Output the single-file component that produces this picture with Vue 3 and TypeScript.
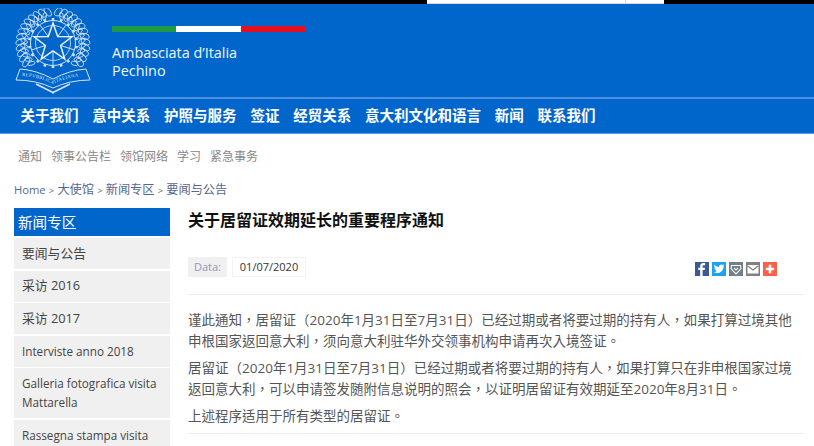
<script setup lang="ts">
const mainNav = ['关于我们', '意中关系', '护照与服务', '签证', '经贸关系', '意大利文化和语言', '新闻', '联系我们']
const subNav = ['通知', '领事公告栏', '领馆网络', '学习', '紧急事务']
const sideItems = [
  { label: '要闻与公告', cjk: true },
  { label: '采访 2016', cjk: true },
  { label: '采访 2017', cjk: true },
  { label: 'Interviste anno 2018', cjk: false },
  { label: 'Galleria fotografica visita Mattarella', cjk: false },
  { label: 'Rassegna stampa visita', cjk: false },
]
const rays = [36, 108, 180, 252, 324]
const teeth = Array.from({ length: 18 }, (_, i) => i * 20)
const leaves = Array.from({ length: 13 }, (_, i) => i)
</script>

<template>
  <div class="page">
    <div class="topstrip">
      <div class="tab"></div>
      <div class="tab short"></div>
    </div>

    <header class="head">
      <div class="brand">
        <svg class="emblem" viewBox="0 0 78 88" fill="none" stroke="#d5e4f6">
          <g stroke-width=".8">
            <g v-for="n in leaves" :key="'l' + n" :transform="`rotate(${-128 + n * 9.6} 39 36)`">
              <ellipse cx="41" cy="3.500" rx="2.600" ry="5" transform="rotate(-22 41 3.500)" />
              <ellipse cx="37" cy="7" rx="1.800" ry="3.800" transform="rotate(22 37 7)" />
            </g>
            <g v-for="n in leaves" :key="'r' + n" :transform="`rotate(${128 - n * 9.6} 39 36)`">
              <ellipse cx="37" cy="3.500" rx="3" ry="4.600" transform="rotate(22 37 3.500)" />
              <ellipse cx="41" cy="7" rx="2" ry="3.600" transform="rotate(-22 41 7)" />
            </g>
          </g>
          <circle cx="39" cy="35" r="22.500" fill="#0066cc" stroke-width="1" />
          <g stroke-width="2.600">
            <line v-for="t in teeth" :key="t" x1="39" y1="10" x2="39" y2="12.500" :transform="`rotate(${t} 39 35)`" />
          </g>
          <circle cx="39" cy="35" r="17.500" stroke-width=".8" />
          <g stroke-width=".9">
            <line v-for="r in rays" :key="r" x1="39" y1="35" x2="39" y2="13" :transform="`rotate(${r} 39 35)`" />
          </g>
          <polygon points="39,15 43.700,28.500 58,28.800 46.600,37.500 50.800,51.200 39,43 27.200,51.200 31.400,37.500 20,28.800 34.300,28.500" fill="#0066cc" stroke="#eaf2fb" stroke-width="1.500" />
          <path d="M6 61 Q22 62 39 71 Q56 62 72 61 L76 72 Q56 72 39 80 Q22 72 2 72 Z" fill="#0066cc" stroke-width="1" />
          <path d="M22 76 L40 85 M56 76 L38 85" stroke-width="1.600" />
          <path id="ribbon-line" d="M5 68 Q23 68 39 76 Q55 68 74 68" stroke="none" />
          <text class="motto" fill="#d5e4f6" stroke="none">
            <textPath href="#ribbon-line" startOffset="3">REPVBBLICA ITALIANA</textPath>
          </text>
        </svg>
        <div class="brand-copy">
          <div class="flag"><i class="green"></i><i class="white"></i><i class="red"></i></div>
          <div class="brand-name">Ambasciata d’Italia<br />Pechino</div>
        </div>
      </div>
      <nav class="mainnav">
        <a v-for="item in mainNav" :key="item">{{ item }}</a>
      </nav>
    </header>

    <nav class="subnav">
      <a v-for="item in subNav" :key="item">{{ item }}</a>
    </nav>

    <div class="crumbs">
      <a class="home">Home</a> <small>&gt;</small> <a>大使馆</a> <small>&gt;</small> <a>新闻专区</a> <small>&gt;</small> <a>要闻与公告</a>
    </div>

    <div class="columns">
      <aside class="side">
        <div class="side-title">新闻专区</div>
        <a v-for="item in sideItems" :key="item.label" class="side-item" :class="{ cjk: item.cjk }">{{ item.label }}</a>
      </aside>

      <main class="content">
        <h1>关于居留证效期延长的重要程序通知</h1>
        <div class="meta">
          <span class="meta-label">Data:</span>
          <span class="meta-date">01/07/2020</span>
          <div class="share">
            <span class="ico fb">
              <svg viewBox="0 0 14 14"><path fill="#fff" d="M7.600 14V8H9.700L10 5.700H7.600V4.300C7.600 3.600 7.800 3.200 8.800 3.200H10.100V1.100C9.900 1.100 9.100 1 8.300 1 6.500 1 5.200 2.100 5.200 4.100V5.700H3.200V8H5.200V14Z" /></svg>
            </span>
            <span class="ico tw">
              <svg viewBox="0 0 14 14"><path fill="#fff" d="M12.500 3.500C12.100 3.700 11.700 3.800 11.200 3.900 11.700 3.600 12 3.200 12.200 2.600 11.800 2.900 11.300 3 10.800 3.100 10.400 2.700 9.800 2.400 9.200 2.400 8 2.400 7 3.400 7 4.600 7 4.800 7 4.900 7.100 5.100 5.200 5 3.600 4.100 2.500 2.800 2.300 3.100 2.200 3.500 2.200 3.900 2.200 4.700 2.600 5.300 3.200 5.700 2.800 5.700 2.500 5.600 2.200 5.400V5.500C2.200 6.500 3 7.400 4 7.600 3.700 7.700 3.300 7.700 3 7.600 3.300 8.500 4.100 9.100 5.100 9.100 4.300 9.700 3.300 10.100 2.300 10.100H1.800C2.800 10.700 4 11.100 5.200 11.100 9.300 11.100 11.500 7.700 11.500 4.800V4.500C11.900 4.200 12.200 3.900 12.500 3.500Z" /></svg>
            </span>
            <span class="ico wc">
              <svg viewBox="0 0 14 14" fill="none" stroke="#fff" stroke-width="1.100"><path d="M2.500 3.500H11.500L12 6.500 9 10 7 12 5 10 2 6.500Z" /><path d="M5 6L7 8 9 6" /></svg>
            </span>
            <span class="ico ml">
              <svg viewBox="0 0 14 14"><rect x="1.500" y="3" width="11" height="8.500" fill="#fff" /><path d="M1.500 3.800L7 8 12.500 3.800" fill="none" stroke="#808080" stroke-width="1.100" /></svg>
            </span>
            <span class="ico pl">
              <svg viewBox="0 0 14 14"><path fill="#fff" d="M5.700 2.800H8.300V5.700H11.200V8.300H8.300V11.200H5.700V8.300H2.800V5.700H5.700Z" /></svg>
            </span>
          </div>
        </div>
        <div class="body">
          <p>谨此通知，居留证（2020年1月31日至7月31日）已经过期或者将要过期的持有人，如果打算过境其他申根国家返回意大利，须向意大利驻华外交领事机构申请再次入境签证。</p>
          <p>居留证（2020年1月31日至7月31日）已经过期或者将要过期的持有人，如果打算只在非申根国家过境返回意大利，可以申请签发随附信息说明的照会，以证明居留证有效期延至2020年8月31日。</p>
          <p>上述程序适用于所有类型的居留证。</p>
        </div>
      </main>
    </div>
  </div>
</template>

<style>
html, body {
  margin: 0;
  background: #fff;
  overflow: hidden;
}
</style>

<style scoped>
.page {
  width: 814px;
  height: 446px;
  overflow: hidden;
  font-family: "Open Sans", "Noto Sans CJK SC", sans-serif;
  color: #444;
}

.topstrip {
  height: 4px;
  background: #000;
  padding-left: 427px;
  display: flex;
}

.tab {
  width: 199px;
  height: 4px;
  background: #fff;
  border-bottom: 1px solid #d8d8d8;
  border-right: 1px solid #d8d8d8;
  box-sizing: border-box;
}

.tab.short {
  width: 38px;
  border-right: 0;
}

.head {
  background: #0066cc;
  height: 130px;
  box-sizing: border-box;
  border-bottom: 1px solid #5c9be0;
}

.brand {
  height: 95px;
  box-sizing: border-box;
  display: flex;
  padding: 4px 0 0 14px;
  border-bottom: 2px solid #4d90e0;
  overflow: hidden;
}

.emblem {
  width: 78px;
  height: 88px;
  flex: none;
}

.motto {
  font-size: 4.800px;
  font-family: "Liberation Serif", serif;
  letter-spacing: .3px;
}

.brand-copy {
  margin-left: 20px;
  padding-top: 18px;
}

.flag {
  display: flex;
  width: 193px;
  height: 6px;
}

.flag i {
  flex: 1;
}

.green { background: #1e9a46; }
.white { background: #fff; }
.red { background: #e8101e; }

.brand-name {
  margin-top: 12px;
  color: #f0f6fd;
  font-size: 14.400px;
  line-height: 18px;
  font-weight: 500;
  font-family: "Open Sans", sans-serif;
}

.mainnav {
  display: flex;
  gap: 13.800px;
  padding: 0 0 4px 20.500px;
  height: 34px;
  box-sizing: border-box;
  align-items: center;
}

.mainnav a {
  color: #fff;
  font-size: 14.500px;
  font-weight: 700;
}

.subnav {
  display: flex;
  gap: 9px;
  padding: 14px 0 0 18px;
  height: 32px;
  font-size: 12px;
  line-height: 18px;
  box-sizing: border-box;
}

.subnav a {
  color: #888;
}

.crumbs {
  padding: 15px 0 0 14px;
  height: 42px;
  box-sizing: border-box;
  font-size: 12.200px;
  line-height: 18px;
  color: #666;
}

.crumbs a {
  color: #56688f;
}

.crumbs .home {
  font-size: 11.200px;
}

.crumbs small {
  font-size: 9.500px;
}

.columns {
  display: flex;
  padding-left: 14px;
}

.side {
  width: 156px;
  flex: none;
  display: flex;
  flex-direction: column;
  gap: 1.500px;
}

.side-title {
  background: #0066cc;
  color: #fff;
  height: 28px;
  line-height: 28px;
  font-size: 14.600px;
  padding-left: 4px;
  margin-bottom: .5px;
}

.side-item {
  background: #f0f0f0;
  color: #444;
  font-size: 11.700px;
  line-height: 19px;
  padding: 6px 8px;
  flex: none;
}

.side-item.cjk {
  font-size: 12.800px;
  padding: 5.500px 8px 6.500px;
}

.content {
  flex: none;
  width: 616px;
  margin-left: 18px;
}

h1 {
  margin: 0;
  height: 49px;
  padding-top: 2px;
  box-sizing: border-box;
  font-size: 16px;
  line-height: 20px;
  font-weight: 700;
  color: #111;
}

.meta {
  display: flex;
  align-items: flex-start;
  padding-bottom: 17px;
  border-bottom: 1px solid #eee;
  height: 20px;
  font-size: 11px;
}

.meta-label {
  background: #f0f0f0;
  color: #8c9ab5;
  width: 39px;
  height: 20px;
  line-height: 20px;
  text-align: center;
}

.meta-date {
  margin-left: 5px;
  width: 72px;
  height: 18px;
  line-height: 18px;
  text-align: center;
  border: 1px solid #f2f2f2;
  color: #333;
}

.share {
  margin: 5px 27px 0 auto;
  display: flex;
  gap: 3px;
}

.ico {
  width: 14px;
  height: 14px;
  display: block;
}

.ico svg {
  display: block;
  width: 14px;
  height: 14px;
}

.fb { background: #3b5998; }
.tw { background: #1da1f2; }
.wc { background: #6f8088; }
.ml { background: #808080; }
.pl { background: #ff5e48; }

.body {
  padding: 15px 11px 0 0;
  border-bottom: 1px solid #eee;
  font-family: "Open Sans", "Noto Sans CJK TC", sans-serif;
  font-size: 13.500px;
  line-height: 21px;
  color: #555;
}

.body p {
  margin: 0 0 6px;
}
</style>
